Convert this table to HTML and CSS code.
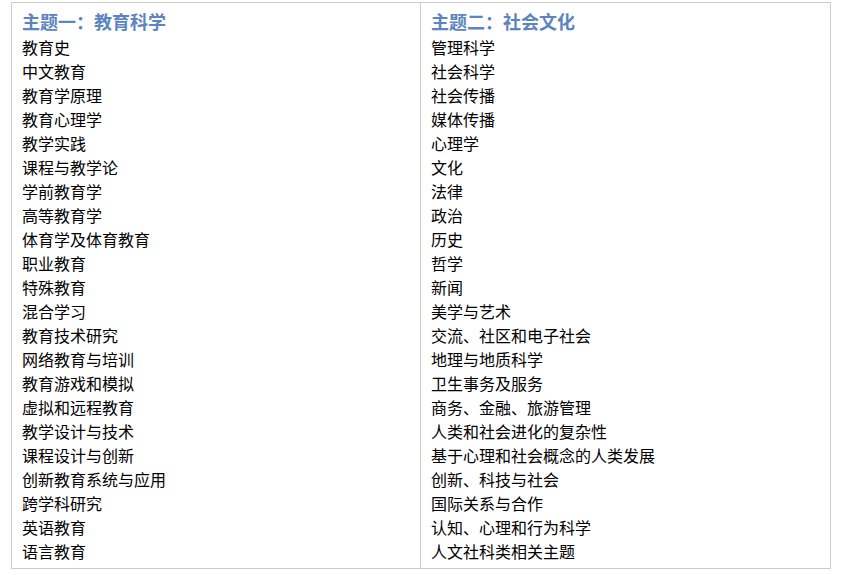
FILE: index.html
```html
<!DOCTYPE html>
<html lang="zh-CN">
<head>
<meta charset="utf-8">
<link rel="stylesheet" href="styles.css">
</head>
<body>
<div class="topics">
  <div class="col">
    <div class="title">主题一：教育科学</div>
    <ul class="list">
      <li>教育史</li>
      <li>中文教育</li>
      <li>教育学原理</li>
      <li>教育心理学</li>
      <li>教学实践</li>
      <li>课程与教学论</li>
      <li>学前教育学</li>
      <li>高等教育学</li>
      <li>体育学及体育教育</li>
      <li>职业教育</li>
      <li>特殊教育</li>
      <li>混合学习</li>
      <li>教育技术研究</li>
      <li>网络教育与培训</li>
      <li>教育游戏和模拟</li>
      <li>虚拟和远程教育</li>
      <li>教学设计与技术</li>
      <li>课程设计与创新</li>
      <li>创新教育系统与应用</li>
      <li>跨学科研究</li>
      <li>英语教育</li>
      <li>语言教育</li>
    </ul>
  </div>
  <div class="col">
    <div class="title">主题二：社会文化</div>
    <ul class="list">
      <li>管理科学</li>
      <li>社会科学</li>
      <li>社会传播</li>
      <li>媒体传播</li>
      <li>心理学</li>
      <li>文化</li>
      <li>法律</li>
      <li>政治</li>
      <li>历史</li>
      <li>哲学</li>
      <li>新闻</li>
      <li>美学与艺术</li>
      <li>交流、社区和电子社会</li>
      <li>地理与地质科学</li>
      <li>卫生事务及服务</li>
      <li>商务、金融、旅游管理</li>
      <li>人类和社会进化的复杂性</li>
      <li>基于心理和社会概念的人类发展</li>
      <li>创新、科技与社会</li>
      <li>国际关系与合作</li>
      <li>认知、心理和行为科学</li>
      <li>人文社科类相关主题</li>
    </ul>
  </div>
</div>
</body>
</html>
```

FILE: styles.css
```css
html, body {
  margin: 0;
  padding: 0;
  background: #ffffff;
}
body {
  padding: 2px 0 0 11px;
  font-family: "Noto Sans CJK SC", "Microsoft YaHei", sans-serif;
  color: #000;
}
.topics {
  display: grid;
  grid-template-columns: 408px 410px;
  width: 820px;
  border: 1px solid #cccccc;
  box-sizing: border-box;
}
.col {
  padding: 4px 10px 5px 10px;
}
.col + .col {
  border-left: 1px solid #cccccc;
}
.title {
  font-size: 18px;
  font-weight: bold;
  line-height: 28px;
  color: #5b84c1;
}
.list {
  list-style: none;
  margin: 0;
  padding: 0;
}
.list li {
  font-size: 16px;
  line-height: 24px;
  height: 24px;
}
```
